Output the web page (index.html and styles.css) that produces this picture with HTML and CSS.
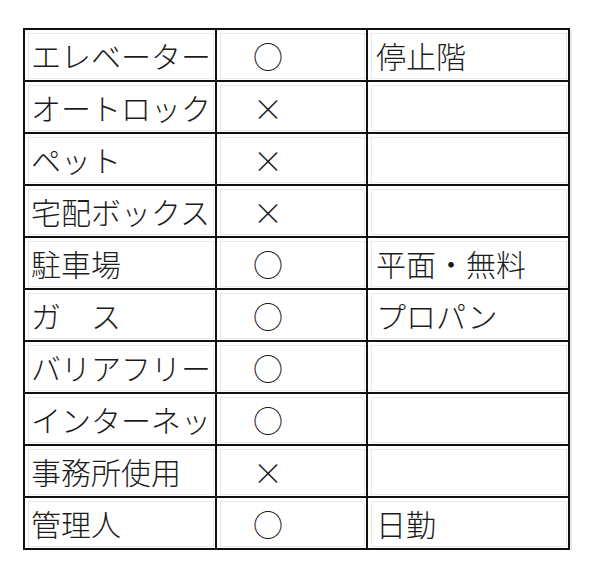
FILE: index.html
```html
<!DOCTYPE html>
<html lang="ja">
<head>
<meta charset="utf-8">
<link rel="stylesheet" href="styles.css">
</head>
<body>
<div class="sheet">
  <div class="cell name">エレベーター</div><div class="cell mark"><span class="sym">○</span></div><div class="cell note">停止階</div>
  <div class="cell name">オートロック</div><div class="cell mark"><span class="sym">×</span></div><div class="cell note"></div>
  <div class="cell name">ペット</div><div class="cell mark"><span class="sym">×</span></div><div class="cell note"></div>
  <div class="cell name">宅配ボックス</div><div class="cell mark"><span class="sym">×</span></div><div class="cell note"></div>
  <div class="cell name">駐車場</div><div class="cell mark"><span class="sym">○</span></div><div class="cell note">平面・無料</div>
  <div class="cell name">ガ　ス</div><div class="cell mark"><span class="sym">○</span></div><div class="cell note">プロパン</div>
  <div class="cell name">バリアフリー</div><div class="cell mark"><span class="sym">○</span></div><div class="cell note"></div>
  <div class="cell name">インターネット</div><div class="cell mark"><span class="sym">○</span></div><div class="cell note"></div>
  <div class="cell name">事務所使用</div><div class="cell mark"><span class="sym">×</span></div><div class="cell note"></div>
  <div class="cell name">管理人</div><div class="cell mark"><span class="sym">○</span></div><div class="cell note">日勤</div>
</div>
</body>
</html>
```
FILE: styles.css
```css
html, body {
  margin: 0;
  padding: 0;
  background: #ffffff;
}
body {
  font-family: "Noto Sans CJK JP", "Noto Sans", sans-serif;
  color: #1c1c1c;
}
.sheet {
  display: grid;
  grid-template-columns: 192px 151px 202px;
  grid-template-rows: repeat(10, 52px);
  width: max-content;
  margin: 28px 0 0 23px;
  border-left: 2px solid #111;
  border-top: 2px solid #111;
  box-shadow: 2px 3px 0 #e6e6e6;
}
.cell {
  border-right: 2px solid #111;
  border-bottom: 2px solid #111;
  outline: 1px solid #e8e8e8;
  outline-offset: -4px;
  display: flex;
  align-items: center;
  overflow: hidden;
  white-space: nowrap;
  font-size: 30px;
  font-weight: 300;
  line-height: 1;
}
.name {
  padding-left: 6px;
}
.mark {
  padding-left: 36px;
}
.sym {
  display: inline-block;
  width: 30px;
  text-align: center;
}
.note {
  padding-left: 8px;
}
```
